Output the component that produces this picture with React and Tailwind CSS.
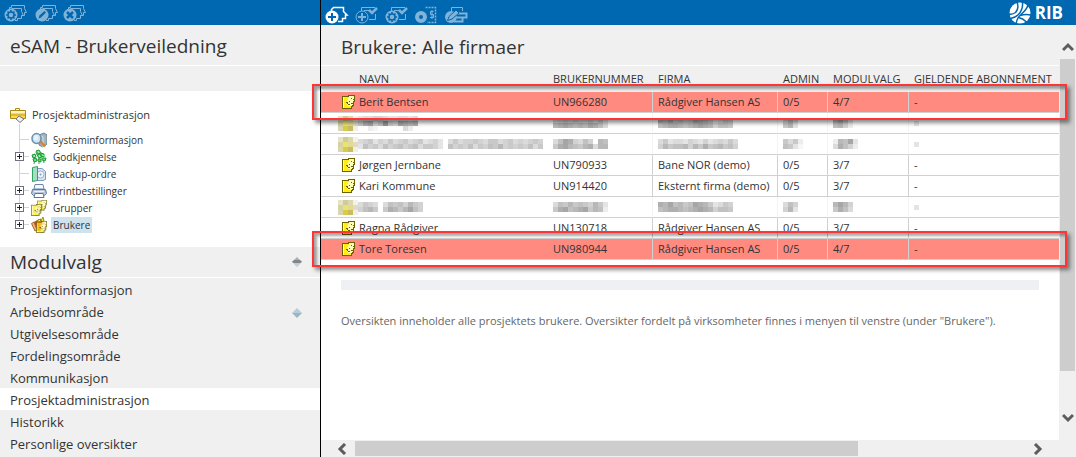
import clsx from 'clsx';

const modules = [
    { name: 'Prosjektinformasjon' },
    { name: 'Arbeidsområde', marker: true },
    { name: 'Utgivelsesområde' },
    { name: 'Fordelingsområde' },
    { name: 'Kommunikasjon' },
    { name: 'Prosjektadministrasjon', active: true },
    { name: 'Historikk' },
    { name: 'Personlige oversikter' },
];

const users = [
    { name: 'Berit Bentsen', number: 'UN966280', company: 'Rådgiver Hansen AS', admin: '0/5', modules: '4/7', plan: '-', marked: true },
    {
        hidden: true,
        name: ['344554334434', '69a57c65a989', '002100000420'],
        number: ['45656556463', '89a9898a974'],
        company: ['98a7867a9863465', '78998789a985776'],
        admin: ['474', '683'],
        modules: ['8a73', '7852'],
    },
    {
        hidden: true,
        name: ['4563546456456345304645565466456454565', '3756475675674665307565746576856565746'],
        number: ['47a95475087', '69a87689488'],
        company: ['4634435435345464', '5867785869678675'],
        admin: ['6462', '7631'],
        modules: ['287a3', '49752'],
    },
    { name: 'Jørgen Jernbane', number: 'UN790933', company: 'Bane NOR (demo)', admin: '0/5', modules: '3/7', plan: '-' },
    { name: 'Kari Kommune', number: 'UN914420', company: 'Eksternt firma (demo)', admin: '0/5', modules: '3/7', plan: '-' },
    {
        hidden: true,
        name: ['4654047675865', '5786069868a75'],
        number: ['47686765863', '69a789a6872'],
        company: ['98a7867a9863465', '78998789a985776'],
        admin: ['475', '583'],
        modules: ['8a85', '6974'],
    },
    { name: 'Ragna Rådgiver', number: 'UN130718', company: 'Rådgiver Hansen AS', admin: '0/5', modules: '3/7', plan: '-' },
    { name: 'Tore Toresen', number: 'UN980944', company: 'Rådgiver Hansen AS', admin: '0/5', modules: '4/7', plan: '-', marked: true },
];

const Heads = () => (
    <g fill="none" stroke="currentColor" strokeWidth="1">
        <path d="M5.5 7V3.5H7.500V1.500H20.500V4.500L22.500 8.500H20.500V11.500H17.500" />
        <path d="M7.500 4.500H17.500V7.500L19.500 11.500H17.500V14.500H13.500V16.500H11" />
    </g>
);

const Gear = () => (
    <>
        <circle cx="7" cy="11" r="6.500" fill="currentColor" />
        <circle cx="7" cy="11" r="3" fill="none" stroke="#0067b1" strokeWidth="1.500" />
        <path d="M7 6v2M7 14v2M2 11h2M10 11h2M3.500 7.500l1.500 1.500M9 13l1.500 1.500M10.500 7.500L9 9M5 13l-1.500 1.500" stroke="#0067b1" strokeWidth="1.500" />
    </>
);

const CheckBoard = () => (
    <g fill="none" stroke="currentColor">
        <path d="M6.500 5V1.500H20M20.500 8V13.500H14M9 4.500H14" strokeWidth="1" />
        <path d="M14 4l3 3 5-5" strokeWidth="2.500" />
    </g>
);

const ToolButton = ({ label, className, children }) => (
    <button type="button" aria-label={label} className={className}>
        <svg width="24" height="18" viewBox="0 0 24 18" className="block">
            {children}
        </svg>
    </button>
);

const faceColors = { K: '#6b6100', Y: '#ffee10', L: '#fffbb0', W: '#fffde0' };

const facePixels = [
    '......KKKKKKK',
    'KKKKKKKLLLLLK',
    'KWYYYYYLLLLLK',
    'KWYYYYLLLKLLK',
    'KWYYYYLLLLLKK',
    'KWYYYLLLLLLLK',
    'KWYYYLLKLLLKK',
    'KWYYKKLLLLLK.',
    'KWYYYKLLLKKK.',
    'KWYYYLKKLLLK.',
    'KWYYYYLLLLKK.',
    'KWYYYYYYYKK..',
    'KWYYYYYYYK...',
    'KKKKKKKKKK...',
];

const FaceShape = () =>
    facePixels.map((row, y) => row.split('').map((key, x) => faceColors[key] && <rect key={`${x}-${y}`} x={x} y={y} width="1.02" height="1.02" fill={faceColors[key]} />));

const FaceIcon = () => (
    <svg width="13" height="14" viewBox="0 0 13 14" className="shrink-0" shapeRendering="crispEdges">
        <FaceShape />
    </svg>
);

// Pixelated stand-in for a name or number, one digit per block
const Mosaic = ({ rows = [] }) => (
    <svg width={Math.max(1, ...rows.map((r) => r.length * 5))} height={rows.length * 5} className="block" shapeRendering="crispEdges" aria-hidden="true">
        {rows.map((row, y) =>
            row.split('').map((digit, x) => <rect key={`${x}-${y}`} x={x * 5} y={y * 5} width="5" height="5" fill="#000" opacity={parseInt(digit, 16) * 0.035} />)
        )}
    </svg>
);

const faceBlocks = [
    ['#e6e3c4', '#cfcb9a', '#dcd8ae', '#f3f2ea'],
    ['#d6d2a4', '#ede36a', '#e2da92', '#dedcc8'],
    ['#d9d5ae', '#d8cb45', '#c8bd62', '#f1f0e6'],
];

const FaceMosaic = () => (
    <svg width="20" height="15" className="shrink-0" shapeRendering="crispEdges" aria-hidden="true">
        {faceBlocks.map((row, y) => row.map((fill, x) => <rect key={`${x}-${y}`} x={x * 5} y={y * 5} width="5" height="5" fill={fill} />))}
    </svg>
);

const RibLogo = () => (
    <div className="flex items-center gap-1 pr-[13px] text-white">
        <svg width="22" height="22" viewBox="0 0 22 22">
            <circle cx="11" cy="11" r="10.500" fill="#fff" />
            <g fill="none" stroke="#0067b1" strokeWidth="1.500">
                <path d="M8 0C9.500 4 9 8 6.500 10.500 4.500 12 2.500 12.500 0 12" />
                <path d="M13.500 0C14 5 12.500 9.500 9.500 12.500 7 15 4.500 16 1.500 16.500" />
                <path d="M7 22C7.500 18 9.500 14.500 12.500 12 15.500 9.500 18 6.500 19 3" />
                <path d="M11 13.500C14 12.500 18 12 22 13" />
                <path d="M9.500 15.500C12.500 16 15 17.500 17.500 20" />
            </g>
        </svg>
        <span className="text-[17px] leading-5 font-bold">RIB</span>
    </div>
);

const treeIcons = {
    system: (
        <>
            <path d="M8 3l5-2 3 2v9l-4 3-4-2z" fill="#9fb4bd" stroke="#6c8791" />
            <path d="M8 3l4 2v10" fill="none" stroke="#dbe7ec" />
            <path d="M9.500 9.500l4.500 5" stroke="#d9822b" strokeWidth="2.500" />
            <ellipse cx="5.500" cy="6.500" rx="4.500" ry="5" fill="#cfe4f5" stroke="#6d8fae" strokeWidth="1.500" />
            <path d="M4 4v4M6 3v5" stroke="#fff" />
        </>
    ),
    approve: (
        <>
            <path d="M3 15l1-5M8 15V9M13 14l-1-4M6 6L5 3" fill="none" stroke="#5f8f6b" />
            <path d="M1 6l3-1 1 3-3 1zM5 2l3-1 2 3-3 1zM6 6l3-1 2 3-3 1zM10 4l3 1 0 3-3-1zM2 10l3-1 1 3-3 1zM11 9l4 0-1 3-3-1zM7 10l3 0 0 3-3-1z" fill="#62e070" stroke="#1b9c3a" />
            <path d="M3 7l1 0M7 3l1 0M8 7l1 0M12 6l0 1" stroke="#e4ffe8" />
        </>
    ),
    backup: (
        <>
            <path d="M6 2.500h5l3.500 3v8L12 14.500H6z" fill="#d7e4f2" stroke="#7c9bbd" />
            <circle cx="9.500" cy="8.500" r="3.500" fill="#f3f7fb" stroke="#9cb3cb" />
            <circle cx="9.500" cy="8.500" r="1" fill="#7c9bbd" />
            <path d="M1.500 1.500L6.500 .5v14l-5 1z" fill="#a7dcc4" stroke="#2da562" />
        </>
    ),
    print: (
        <>
            <path d="M4 1.500h8L13 6H3z" fill="#f6f9fd" stroke="#6d86a8" />
            <path d="M1.500 6.500h13l1 4-2 2h-11l-2-2z" fill="#b9c9dd" stroke="#5e7698" />
            <path d="M4 10.500h8l1 4H3z" fill="#fff" stroke="#5e7698" />
            <path d="M3 8.500h10" stroke="#eaf1f9" />
        </>
    ),
    groups: (
        <>
            <g transform="translate(6 0) scale(.75)">
                <FaceShape />
            </g>
            <g transform="translate(0 4) scale(.85)">
                <FaceShape />
            </g>
        </>
    ),
    users: (
        <>
            <path d="M2 6l5-3 3-1 2 3-3 9-5-1z" fill="#e8321e" stroke="#a97b1c" />
            <path d="M.5 6.500L3 5l3 8-2 1z" fill="#f2b28a" stroke="#a9632c" />
            <path d="M6 5l2-3 2 2 2-4 1 4z" fill="#fff27a" stroke="#a08a12" />
            <g transform="translate(5 4) scale(.85)">
                <FaceShape />
            </g>
        </>
    ),
};

const treeItems = [
    { name: 'Systeminformasjon', icon: 'system' },
    { name: 'Godkjennelse', icon: 'approve', expandable: true },
    { name: 'Backup-ordre', icon: 'backup' },
    { name: 'Printbestillinger', icon: 'print', expandable: true },
    { name: 'Grupper', icon: 'groups', expandable: true },
    { name: 'Brukere', icon: 'users', expandable: true, active: true },
];

const TreeItem = ({ item, last }) => (
    <li className="flex h-[17px] items-center">
        <span className="relative flex h-full w-4 shrink-0 items-center">
            <span className={clsx('absolute top-0 left-1 w-px bg-[#ccd6da]', last ? 'h-2' : 'h-full')} />
            <span className="absolute left-1 h-px w-[10px] bg-[#ccd6da]" />
            {item.expandable && (
                <button type="button" aria-label={`Utvid ${item.name}`} className="relative h-[9px] w-[9px] bg-white">
                    <svg width="9" height="9" viewBox="0 0 9 9" shapeRendering="crispEdges" className="block">
                        <path d="M.5 .5h8v8h-8z" fill="#fff" stroke="#6f6f80" />
                        <path d="M2 4.500h5M4.500 2v5" stroke="#222" />
                    </svg>
                </button>
            )}
        </span>
        <svg width="16" height="16" viewBox="0 0 16 16" className="shrink-0">
            {treeIcons[item.icon]}
        </svg>
        <a href="#" className={clsx('ml-1 px-[2px] text-[10px] leading-4', item.active && 'bg-[#cfe3ef]')}>
            {item.name}
        </a>
    </li>
);

const Diamond = ({ dark }) => (
    <svg width="10" height="10" viewBox="0 0 10 10">
        <path d="M5 0L10 5H0Z" fill={dark ? '#a9b0b3' : '#b5ced9'} />
        <path d="M0 5H10L5 10Z" fill={dark ? '#b7d0da' : '#9cb5c1'} />
        {dark && <path d="M2 3h6l2 2-2 1H2L0 5z" fill="#858585" />}
    </svg>
);

const Sidebar = () => (
    <aside className="flex w-80 shrink-0 flex-col bg-[#f0f0f0]">
        <div className="flex h-[25px] items-start bg-[#0067b1] pt-1 pl-1 text-[#80b3d8]">
            <ToolButton label="Innstillinger" className="w-[31px]">
                <Heads />
                <Gear />
            </ToolButton>
            <ToolButton label="Rediger" className="w-7">
                <Heads />
                <circle cx="7" cy="11" r="6.500" fill="currentColor" />
                <path d="M3.500 14.500l1-3 5-4.500 1.500 1.500-5 5z" fill="#0067b1" />
            </ToolButton>
            <ToolButton label="Slett" className="w-7">
                <Heads />
                <circle cx="7" cy="11" r="6.500" fill="currentColor" />
                <path d="M4 8l6 6M10 8l-6 6" stroke="#0067b1" strokeWidth="2.500" />
            </ToolButton>
        </div>
        <h1 className="h-[41px] border-b border-white pt-2 pl-[10px] text-[19px] leading-[26px]">eSAM - Brukerveiledning</h1>
        <div className="h-[25px]" />
        <div className="h-[156px] bg-white pt-[15px] pl-[10px]">
            <a href="#" className="flex h-[18px] items-center gap-[6px] text-[11px] leading-[18px]">
                <svg width="16" height="16" viewBox="0 0 16 16" className="shrink-0">
                    <path d="M5.500 3V1.500h4V3" fill="none" stroke="#a88a1c" />
                    <path d="M.5 3.500h15v8H.5z" fill="#ffd84a" stroke="#a88a1c" />
                    <path d="M1 5h14" stroke="#fff4b5" strokeWidth="2" />
                    <path d="M1 8h14" stroke="#c29a22" />
                    <path d="M6 12l3-3 5 3-4 3.500z" fill="#eee" stroke="#777" />
                </svg>
                Prosjektadministrasjon
            </a>
            <ul className="relative ml-[5px] pt-[7px]">
                <span className="absolute top-0 left-1 h-2 w-px bg-[#ccd6da]" />
                {treeItems.map((item, index) => (
                    <TreeItem key={item.name} item={item} last={index === treeItems.length - 1} />
                ))}
            </ul>
        </div>
        <div className="flex h-[31px] items-center justify-between border-b border-white pr-[18px] pl-[10px]">
            <h2 className="text-[19px] leading-[26px]">Modulvalg</h2>
            <Diamond dark />
        </div>
        <nav>
            {modules.map((item) => (
                <a key={item.name} href="#" className={clsx('flex h-[22px] items-center justify-between pt-[3px] pr-[18px] pl-[10px] text-[13px] leading-[19px]', item.active && 'bg-white')}>
                    {item.name}
                    {item.marker && <Diamond />}
                </a>
            ))}
        </nav>
    </aside>
);

const UserRow = ({ user }) => {
    const cell = clsx('border-b border-b-[#d0d0d0]', user.marked && 'bg-[#ff8a80]');
    const divided = clsx(cell, 'border-r pl-[5px]', user.hidden ? 'border-r-[#f4f4f4]' : 'border-r-[#d0d0d0]');
    const show = (value) => (user.hidden ? <Mosaic rows={value} /> : value);

    return (
        <tr className="h-[21px]">
            <td className={cell}>
                <div className={clsx('flex items-center', user.hidden ? 'pl-[17px]' : 'gap-1 pl-[21px]')}>
                    {user.hidden ? <FaceMosaic /> : <FaceIcon />}
                    {show(user.name)}
                </div>
            </td>
            <td className={divided}>{show(user.number)}</td>
            <td className={divided}>{show(user.company)}</td>
            <td className={divided}>{show(user.admin)}</td>
            <td className={divided}>{show(user.modules)}</td>
            <td className={clsx(cell, 'pl-[5px]')}>{user.hidden ? <Mosaic rows={['3']} /> : user.plan}</td>
        </tr>
    );
};

const UserTable = () => (
    <table className="w-full table-fixed border-separate border-spacing-0 text-left text-[11px] leading-5 whitespace-nowrap">
        <colgroup>
            <col className="w-[227px]" />
            <col className="w-[105px]" />
            <col className="w-[125px]" />
            <col className="w-[50px]" />
            <col className="w-[81px]" />
            <col />
        </colgroup>
        <thead>
            <tr className="h-[26px] bg-[#f0f0f0]">
                <th className="pl-[38px] font-normal">NAVN</th>
                <th className="pl-[5px] font-normal">BRUKERNUMMER</th>
                <th className="pl-[5px] font-normal">FIRMA</th>
                <th className="pl-[5px] font-normal">ADMIN</th>
                <th className="pl-[5px] font-normal">MODULVALG</th>
                <th className="pl-[5px] font-normal">GJELDENDE ABONNEMENT</th>
            </tr>
        </thead>
        <tbody>
            {users.map((user, index) => (
                <UserRow key={index} user={user} />
            ))}
        </tbody>
    </table>
);

const Highlight = ({ className }) => (
    <div className={clsx('pointer-events-none absolute -right-2 -left-[9px] h-9 border-2 border-[#ff3535] shadow-[3px_3px_4px_rgba(0,0,0,0.45),inset_3px_3px_3px_rgba(0,0,0,0.35)]', className)} />
);

const Arrow = ({ label, d, className }) => (
    <button type="button" aria-label={label} className={clsx('flex shrink-0 items-center justify-center', className)}>
        <svg width="12" height="12" viewBox="0 0 12 12" fill="none" stroke="#5c5c5c" strokeWidth="3">
            <path d={d} />
        </svg>
    </button>
);

const App = () => {
    return (
        <div className="flex min-h-screen bg-white font-['Open_Sans','Segoe_UI',sans-serif] text-[#333]">
            <Sidebar />
            <main className="flex min-w-0 flex-1 flex-col border-l border-black">
                <div className="flex h-[25px] items-center justify-between bg-[#0067b1]">
                    <div className="flex items-start pt-1 pl-1 text-[#80b3d8]">
                        <ToolButton label="Ny bruker" className="w-[30px] text-white">
                            <path d="M6.500 5V3.500L8.500 1.500H18.500V5.500L22 9H20.500V12.500H17.500V15.500H13" fill="none" stroke="currentColor" strokeWidth="1.500" />
                            <circle cx="7" cy="11" r="6.500" fill="currentColor" />
                            <path d="M7 7v8M3 11h8" stroke="#0067b1" strokeWidth="2" />
                        </ToolButton>
                        <ToolButton label="Legg til modul" className="w-[30px]">
                            <CheckBoard />
                            <circle cx="7" cy="11" r="6" fill="#0067b1" stroke="currentColor" />
                            <path d="M7 7v8M3 11h8" stroke="currentColor" strokeWidth="2" />
                        </ToolButton>
                        <ToolButton label="Modulinnstillinger" className="w-[30px]">
                            <CheckBoard />
                            <Gear />
                        </ToolButton>
                        <ToolButton label="Abonnement" className="w-[30px]">
                            <path d="M10.500 1.500H20.500V16.500H12" fill="none" stroke="currentColor" strokeDasharray="2 1" strokeWidth="1.500" />
                            <path d="M18.500 5.500H15.500V8.500H18.500V11.500H15M17 4V13" fill="none" stroke="currentColor" />
                            <circle cx="6" cy="11" r="4" fill="none" stroke="currentColor" strokeWidth="4" />
                        </ToolButton>
                        <ToolButton label="Rediger modul" className="w-[30px]">
                            <path d="M6.500 5V1.500H17.500V5" fill="none" stroke="currentColor" />
                            <path d="M12 7.500H21.500V11.500H12M9 15.500H17.500V12" fill="none" stroke="currentColor" strokeWidth="2" />
                            <circle cx="6" cy="11" r="6" fill="currentColor" />
                            <path d="M2.500 14.500L4 10.500 11 4l3 3-7 6z" fill="#80b3d8" stroke="#0067b1" />
                        </ToolButton>
                    </div>
                    <RibLogo />
                </div>
                <div className="flex flex-1">
                    <div className="relative min-w-0 flex-1">
                        <div className="h-[41px] border-b border-white bg-[#f0f0f0] pt-[9px] pl-5">
                            <h2 className="text-[19px] leading-[26px]">Brukere: Alle firmaer</h2>
                        </div>
                        <UserTable />
                        <Highlight className="top-[59px]" />
                        <Highlight className="top-[206px]" />
                        <div className="mx-5 mt-5 h-[10px] bg-[#eff0f3]" />
                        <p className="mt-[21px] px-5 text-[11px] leading-5 text-[#666]">
                            Oversikten inneholder alle prosjektets brukere. Oversikter fordelt på virksomheter finnes i menyen til venstre (under "Brukere").
                        </p>
                    </div>
                    <div className="flex w-[17px] shrink-0 flex-col bg-[#f0f0f0] pt-3">
                        <Arrow label="Rull opp" d="M1 8l5-5 5 5" className="h-[22px]" />
                        <div className="flex-1 px-px">
                            <div className="h-[312px] bg-[#cdcdcd]" />
                        </div>
                        <Arrow label="Rull ned" d="M1 4l5 5 5-5" className="mb-3 h-[22px]" />
                    </div>
                </div>
                <div className="flex h-[17px] shrink-0 bg-[#f0f0f0] pr-[26px] pl-[10px]">
                    <Arrow label="Rull til venstre" d="M8 1L3 6l5 5" className="w-6" />
                    <div className="flex-1 py-px">
                        <div className="h-full w-3/4 bg-[#cdcdcd]" />
                    </div>
                    <Arrow label="Rull til høyre" d="M3 1l5 5-5 5" className="w-6" />
                </div>
            </main>
        </div>
    );
};

export default App;
